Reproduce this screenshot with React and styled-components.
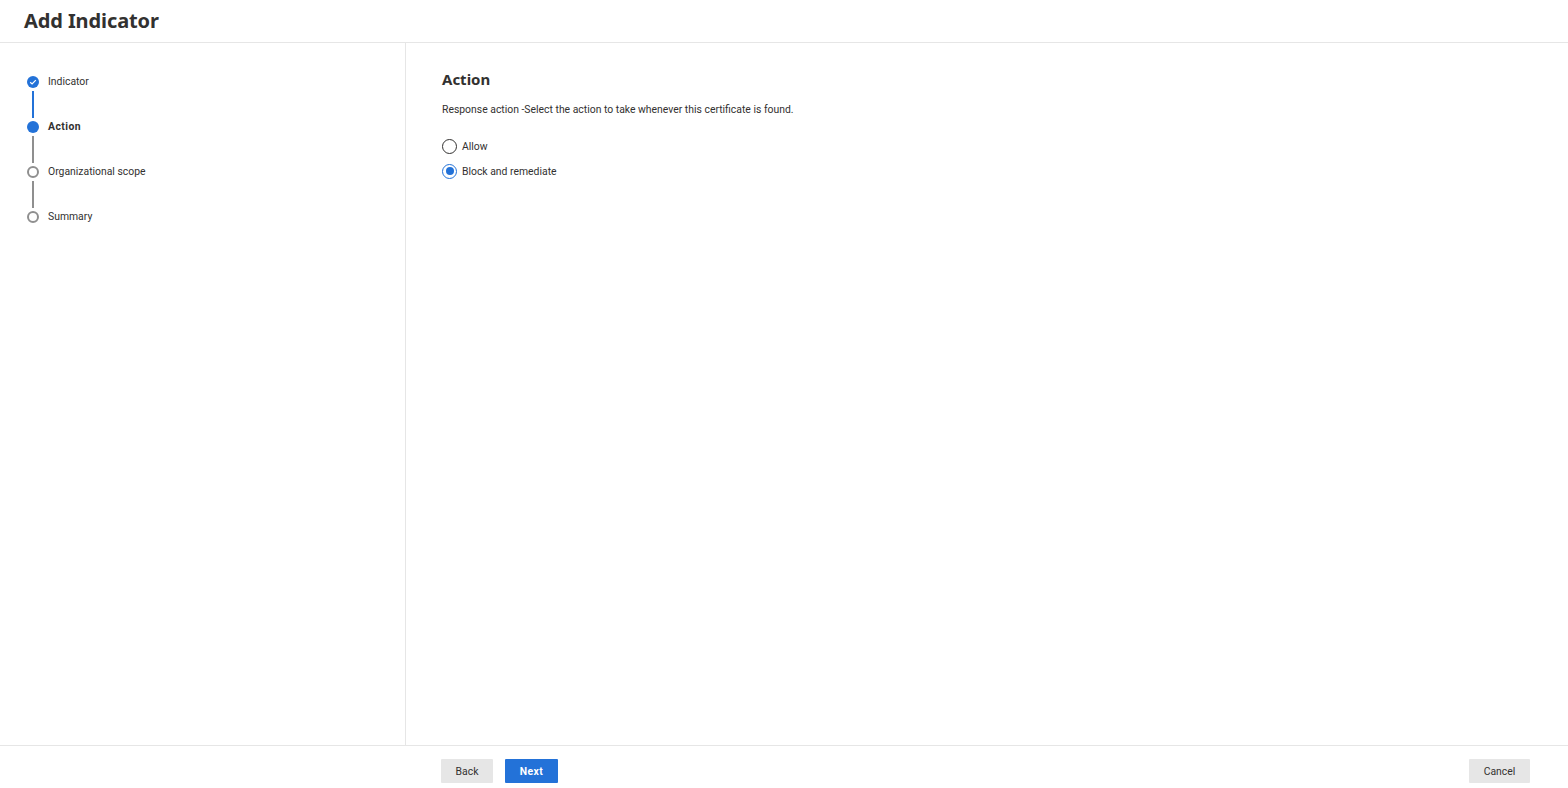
import React from "react";
import styled, { createGlobalStyle } from "styled-components";

const GlobalStyle = createGlobalStyle`
  html, body {
    margin: 0;
    padding: 0;
    background: #fff;
  }
  body {
    font-family: "Noto Sans", "Open Sans", "Liberation Sans", sans-serif;
    color: #323130;
  }
`;

const smallFont = `"Roboto", "Noto Sans", "Liberation Sans", sans-serif`;

const Page = styled.div`
  display: flex;
  flex-direction: column;
  height: 788px;
  overflow: hidden;
`;

const Header = styled.header`
  height: 43px;
  flex: none;
  box-sizing: border-box;
  border-bottom: 1px solid #e6e6e6;
  padding: 0 0 2px 24px;
  display: flex;
  align-items: center;
`;

const Title = styled.h1`
  margin: 0;
  font-size: 20px;
  font-weight: 700;
  letter-spacing: -0.1px;
  color: #323130;
`;

const Body = styled.div`
  flex: 1;
  display: flex;
  min-height: 0;
`;

const Sidebar = styled.nav`
  width: 406px;
  flex: none;
  box-sizing: border-box;
  border-right: 1px solid #e6e6e6;
  padding: 32px 0 0 27px;
`;

const Step = styled.div`
  display: flex;
  height: 45px;
  gap: 9px;
`;

const Track = styled.div`
  width: 12px;
  display: flex;
  flex-direction: column;
  align-items: center;
  padding-top: 1px;
`;

const Dot = styled.span`
  width: 12px;
  height: 12px;
  flex: none;
  box-sizing: border-box;
  border-radius: 50%;
  display: flex;
  align-items: center;
  justify-content: center;
  background: ${(p) => (p.$state === "todo" ? "#fff" : "#2372d8")};
  border: ${(p) => (p.$state === "todo" ? "2px solid #8f8f8f" : "none")};
`;

const Line = styled.span`
  width: 2px;
  height: 27px;
  margin-top: 3px;
  background: ${(p) => (p.$done ? "#2372d8" : "#8f8f8f")};
`;

const StepLabel = styled.span`
  font-family: ${smallFont};
  font-size: 10.4px;
  line-height: 16px;
  margin-top: -1px;
  font-weight: ${(p) => (p.$active ? 700 : 400)};
  letter-spacing: ${(p) => (p.$active ? "0.45px" : "0")};
  color: #323130;
`;

const Content = styled.main`
  flex: 1;
  padding: 26px 0 0 36px;
`;

const SectionTitle = styled.h2`
  margin: 0 0 13px;
  font-size: 15px;
  line-height: 20px;
  font-weight: 700;
  color: #323130;
`;

const Description = styled.p`
  margin: 0 0 20px;
  font-family: ${smallFont};
  font-size: 10.4px;
  line-height: 16px;
  color: #323130;
`;

const RadioList = styled.div`
  display: flex;
  flex-direction: column;
  gap: 9px;
`;

const RadioRow = styled.label`
  display: flex;
  align-items: center;
  gap: 5px;
  height: 16px;
  font-family: ${smallFont};
  font-size: 10.4px;
  color: #323130;
`;

const RadioCircle = styled.span`
  width: 15px;
  height: 15px;
  flex: none;
  box-sizing: border-box;
  border-radius: 50%;
  background: #fff;
  border: 1.3px solid ${(p) => (p.$checked ? "#2372d8" : "#323130")};
  display: flex;
  align-items: center;
  justify-content: center;
  &::after {
    content: "";
    display: ${(p) => (p.$checked ? "block" : "none")};
    width: 8px;
    height: 8px;
    border-radius: 50%;
    background: #2372d8;
  }
`;

const Footer = styled.footer`
  height: 43px;
  flex: none;
  box-sizing: border-box;
  border-top: 1px solid #e6e6e6;
  display: flex;
  padding: 13px 38px 0 441px;
  gap: 12px;
`;

const Button = styled.button`
  height: 24px;
  padding: 0;
  width: ${(p) => p.$width}px;
  margin-left: ${(p) => (p.$push ? "auto" : "0")};
  border: none;
  border-radius: 1px;
  font-family: ${smallFont};
  font-size: 10.4px;
  font-weight: ${(p) => (p.$primary ? 700 : 400)};
  letter-spacing: ${(p) => (p.$primary ? "0.4px" : "0")};
  color: ${(p) => (p.$primary ? "#fff" : "#323130")};
  background: ${(p) => (p.$primary ? "#2372d8" : "#e6e6e6")};
`;

const steps = [
  { label: "Indicator", state: "done" },
  { label: "Action", state: "active" },
  { label: "Organizational scope", state: "todo" },
  { label: "Summary", state: "todo" },
];

export default function App() {
  return (
    <Page>
      <GlobalStyle />
      <Header>
        <Title>Add Indicator</Title>
      </Header>
      <Body>
        <Sidebar>
          {steps.map((step, i) => (
            <Step key={step.label}>
              <Track>
                <Dot $state={step.state}>
                  {step.state === "done" && (
                    <svg width="8" height="8" viewBox="0 0 8 8" fill="none">
                      <path d="M1.2 4.2 3.1 6 6.8 2.2" stroke="#fff" strokeWidth="1.2" />
                    </svg>
                  )}
                </Dot>
                {i < steps.length - 1 && <Line $done={step.state === "done"} />}
              </Track>
              <StepLabel $active={step.state === "active"}>{step.label}</StepLabel>
            </Step>
          ))}
        </Sidebar>
        <Content>
          <SectionTitle>Action</SectionTitle>
          <Description>
            Response action -Select the action to take whenever this certificate is found.
          </Description>
          <RadioList>
            <RadioRow>
              <RadioCircle />
              Allow
            </RadioRow>
            <RadioRow>
              <RadioCircle $checked />
              Block and remediate
            </RadioRow>
          </RadioList>
        </Content>
      </Body>
      <Footer>
        <Button $width={52}>Back</Button>
        <Button $width={53} $primary>Next</Button>
        <Button $width={61} $push>Cancel</Button>
      </Footer>
    </Page>
  );
}
